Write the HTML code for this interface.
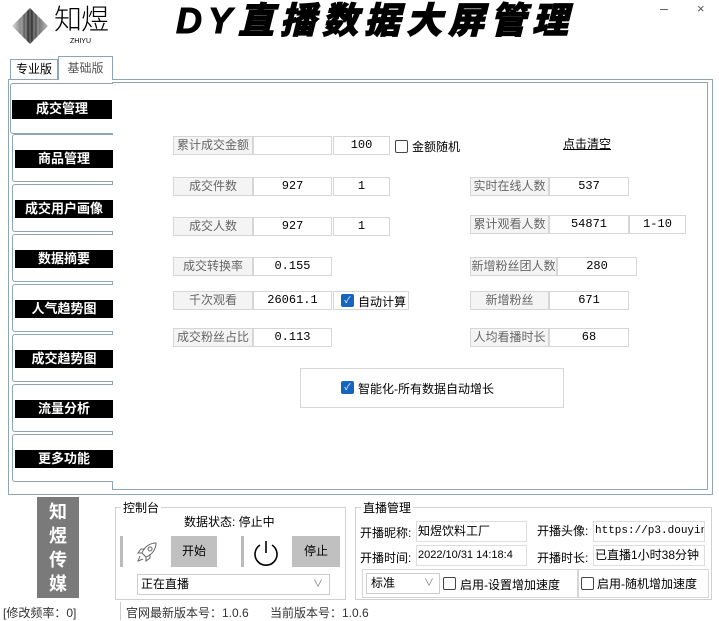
<!DOCTYPE html>
<html><head><meta charset="utf-8"><style>
*{margin:0;padding:0;box-sizing:border-box}
body{width:719px;height:621px;background:#fff;font-family:"Liberation Sans","Noto Sans CJK SC",sans-serif;font-size:12px;color:#000;position:relative;overflow:hidden}
.a{position:absolute}
.box{position:absolute;border:1px solid #d6d6d6;background:#fff;text-align:center;line-height:17px;height:19px;font-size:12px}
.n{font-family:"Liberation Mono",monospace;font-size:12px}
.lb{color:#666;background:#f4f4f4}
.nav{position:absolute;left:12px;width:101px;height:48px;border:1px solid #8fa4b4;border-right:none;border-radius:3px 0 0 3px;background:#fff}
.bar{position:absolute;left:2px;width:98px;height:18px;top:15px;background:#000;color:#fff;font-weight:bold;font-size:13px;text-align:center;line-height:18px}
.cb{position:absolute;width:13px;height:13px;border:1px solid #444;border-radius:2px;background:#fff}
.cbk{position:absolute;width:13px;height:13px;border-radius:2px;background:#1565c0;color:#fff;font-size:9px;line-height:13px;text-align:center}
.grp{position:absolute;border:1px solid #d0d0d0}
.inp{position:absolute;border:1px solid #ddd;background:#fff;height:21px;line-height:19px;font-size:12px;padding-left:1px;overflow:hidden;white-space:nowrap}
</style></head><body>
<svg class="a" style="left:10px;top:6px" width="40" height="40" viewBox="0 0 40 40">
<defs><linearGradient id="g" x1="0" x2="1"><stop offset="0" stop-color="#ddd"/><stop offset=".5" stop-color="#333"/><stop offset="1" stop-color="#bbb"/></linearGradient></defs>
<polygon points="20,2 38,20 20,38 2,20" fill="url(#g)"/>
<g stroke="#fff" stroke-width=".6" opacity=".6"><line x1="12" y1="6" x2="12" y2="34"/><line x1="16" y1="4" x2="16" y2="36"/><line x1="20" y1="2" x2="20" y2="38"/><line x1="24" y1="4" x2="24" y2="36"/><line x1="28" y1="6" x2="28" y2="34"/></g></svg>
<div class="a" style="left:54px;top:3px;font-size:28px;line-height:34px;font-weight:300;letter-spacing:-1px">知煜</div>
<div class="a" style="left:70px;top:38px;font-size:7px">ZHIYU</div>
<div class="a" style="left:176px;top:0px;font-size:36px;line-height:42px;font-weight:900;font-style:italic;letter-spacing:6px;-webkit-text-stroke:1px #000">DY直播数据大屏管理</div>
<div class="a" style="left:660px;top:0px;font-size:14px;color:#555">–</div>
<div class="a" style="left:697px;top:1px;font-size:13px;color:#555">×</div>
<div class="a" style="left:10px;top:59px;width:48px;height:20px;border:1px solid #8fa4b4;border-bottom:none;text-align:center;line-height:19px;font-size:12px">专业版</div>
<div class="a" style="left:58px;top:56px;width:55px;height:24px;border:1px solid #8fa4b4;border-bottom:none;background:#fff;text-align:center;line-height:22px;color:#555;font-size:12px;z-index:2">基础版</div>
<div class="a" style="left:8px;top:79px;width:705px;height:416px;border:1px solid #8fa4b4"></div>
<div class="a" style="left:112px;top:82px;width:596px;height:408px;border:1px solid #8fa4b4"></div>
<div class="nav" style="top:83px;left:10px;width:103px;height:51px;z-index:3"><div class="bar" style="left:1px;top:16px;width:100px;height:19px">成交管理</div></div>
<div class="nav" style="top:134px"><div class="bar">商品管理</div></div>
<div class="nav" style="top:184px"><div class="bar">成交用户画像</div></div>
<div class="nav" style="top:234px"><div class="bar">数据摘要</div></div>
<div class="nav" style="top:284px"><div class="bar">人气趋势图</div></div>
<div class="nav" style="top:334px"><div class="bar">成交趋势图</div></div>
<div class="nav" style="top:384px"><div class="bar">流量分析</div></div>
<div class="nav" style="top:434px"><div class="bar">更多功能</div></div>
<div class="box lb" style="left:173px;top:136px;width:80px">累计成交金额</div>
<div class="box" style="left:253px;top:136px;width:79px"></div>
<div class="box n" style="left:333px;top:136px;width:57px">100</div>
<div class="cb" style="left:395px;top:140px"></div>
<div class="a" style="left:412px;top:138px">金额随机</div>
<div class="a" style="left:563px;top:135px;text-decoration:underline;font-size:12px">点击清空</div>
<div class="box lb" style="left:173px;top:177px;width:80px">成交件数</div>
<div class="box n" style="left:253px;top:177px;width:79px">927</div>
<div class="box n" style="left:333px;top:177px;width:57px">1</div>
<div class="box lb" style="left:173px;top:217px;width:80px">成交人数</div>
<div class="box n" style="left:253px;top:217px;width:79px">927</div>
<div class="box n" style="left:333px;top:217px;width:57px">1</div>
<div class="box lb" style="left:173px;top:257px;width:80px">成交转换率</div>
<div class="box n" style="left:253px;top:257px;width:79px">0.155</div>
<div class="box lb" style="left:173px;top:291px;width:80px">千次观看</div>
<div class="box n" style="left:253px;top:291px;width:79px">26061.1</div>
<div class="box" style="left:333px;top:291px;width:76px"></div>
<div class="cbk" style="left:341px;top:294px">✓</div>
<div class="a" style="left:358px;top:293px">自动计算</div>
<div class="box lb" style="left:173px;top:328px;width:80px">成交粉丝占比</div>
<div class="box n" style="left:253px;top:328px;width:79px">0.113</div>
<div class="box lb" style="left:470px;top:177px;width:79px">实时在线人数</div>
<div class="box n" style="left:549px;top:177px;width:80px">537</div>
<div class="box lb" style="left:470px;top:215px;width:79px">累计观看人数</div>
<div class="box n" style="left:549px;top:215px;width:80px">54871</div>
<div class="box n" style="left:629px;top:215px;width:57px">1-10</div>
<div class="box lb" style="left:470px;top:257px;width:87px">新增粉丝团人数</div>
<div class="box n" style="left:557px;top:257px;width:80px">280</div>
<div class="box lb" style="left:470px;top:291px;width:79px">新增粉丝</div>
<div class="box n" style="left:549px;top:291px;width:80px">671</div>
<div class="box lb" style="left:470px;top:328px;width:79px">人均看播时长</div>
<div class="box n" style="left:549px;top:328px;width:80px">68</div>
<div class="a" style="left:300px;top:368px;width:264px;height:40px;border:1px solid #d6d6d6"></div>
<div class="cbk" style="left:341px;top:381px">✓</div>
<div class="a" style="left:358px;top:380px">智能化-所有数据自动增长</div>
<div class="a" style="left:37px;top:497px;width:42px;height:101px;background:#7a7a7a;color:#fff;font-weight:bold;font-size:18px;line-height:24px;text-align:center;padding-top:3px">知<br>煜<br>传<br>媒</div>
<div class="grp" style="left:115px;top:507px;width:231px;height:93px"></div>
<div class="a" style="left:121px;top:499px;background:#fff;padding:0 2px">控制台</div>
<div class="a" style="left:184px;top:513px">数据状态: 停止中</div>
<div class="a" style="left:120px;top:536px;width:3px;height:31px;background:#bbb"></div>
<svg class="a" style="left:136px;top:541px" width="22" height="22" viewBox="0 0 22 22" fill="none" stroke="#666" stroke-width="1"><path d="M20 2 C14 2 8 6 6 12 L10 16 C16 14 20 8 20 2Z"/><circle cx="14" cy="8" r="2"/><path d="M6 12 L2 12 L5 8 L9 8 M10 16 L10 20 L14 17 L14 13 M4 15 L2 20 L7 18"/></svg>
<div class="a" style="left:171px;top:536px;width:46px;height:31px;background:#c0c0c0;text-align:center;line-height:31px">开始</div>
<div class="a" style="left:241px;top:536px;width:3px;height:31px;background:#bbb"></div>
<svg class="a" style="left:251px;top:538px" width="30" height="30" viewBox="0 0 30 30" fill="none" stroke="#000" stroke-width="1.6"><path d="M9 7 A11 11 0 1 0 21 7"/><line x1="15" y1="3" x2="15" y2="15"/></svg>
<div class="a" style="left:292px;top:536px;width:48px;height:31px;background:#c0c0c0;text-align:center;line-height:31px">停止</div>
<div class="a" style="left:137px;top:574px;width:193px;height:21px;border:1px solid #ccc;line-height:19px;padding-left:3px">正在直播<span style="position:absolute;right:6px;color:#777;font-size:10px">∨</span></div>
<div class="grp" style="left:355px;top:507px;width:357px;height:93px"></div>
<div class="a" style="left:361px;top:499px;background:#fff;padding:0 2px">直播管理</div>
<div class="a" style="left:360px;top:524px">开播昵称:</div>
<div class="inp" style="left:416px;top:521px;width:111px">知煜饮料工厂</div>
<div class="a" style="left:537px;top:522px">开播头像:</div>
<div class="inp" style="left:593px;top:521px;width:112px;font-family:'Liberation Mono',monospace;font-size:11px">https://p3.douyinp</div>
<div class="a" style="left:360px;top:549px">开播时间:</div>
<div class="inp" style="left:416px;top:545px;width:111px;font-size:11px">2022/10/31 14:18:4</div>
<div class="a" style="left:537px;top:549px">开播时长:</div>
<div class="inp" style="left:593px;top:545px;width:112px">已直播1小时38分钟</div>
<div class="a" style="left:362px;top:569px;width:216px;height:29px;border:1px solid #d6d6d6"></div>
<div class="a" style="left:578px;top:569px;width:131px;height:29px;border:1px solid #d6d6d6"></div>
<div class="a" style="left:366px;top:573px;width:74px;height:21px;border:1px solid #ccc;line-height:19px;padding-left:4px">标准<span style="position:absolute;right:5px;color:#777;font-size:10px">∨</span></div>
<div class="cb" style="left:443px;top:577px"></div>
<div class="a" style="left:460px;top:576px">启用-设置增加速度</div>
<div class="cb" style="left:581px;top:577px"></div>
<div class="a" style="left:597px;top:575px">启用-随机增加速度</div>
<div class="a" style="left:3px;top:604px;color:#333">[修改频率：0]</div>
<div class="a" style="left:120px;top:602px;width:1px;height:18px;background:#ccc"></div>
<div class="a" style="left:126px;top:604px;color:#333">官网最新版本号：1.0.6</div>
<div class="a" style="left:270px;top:604px;color:#333">当前版本号：1.0.6</div>
</body></html>
